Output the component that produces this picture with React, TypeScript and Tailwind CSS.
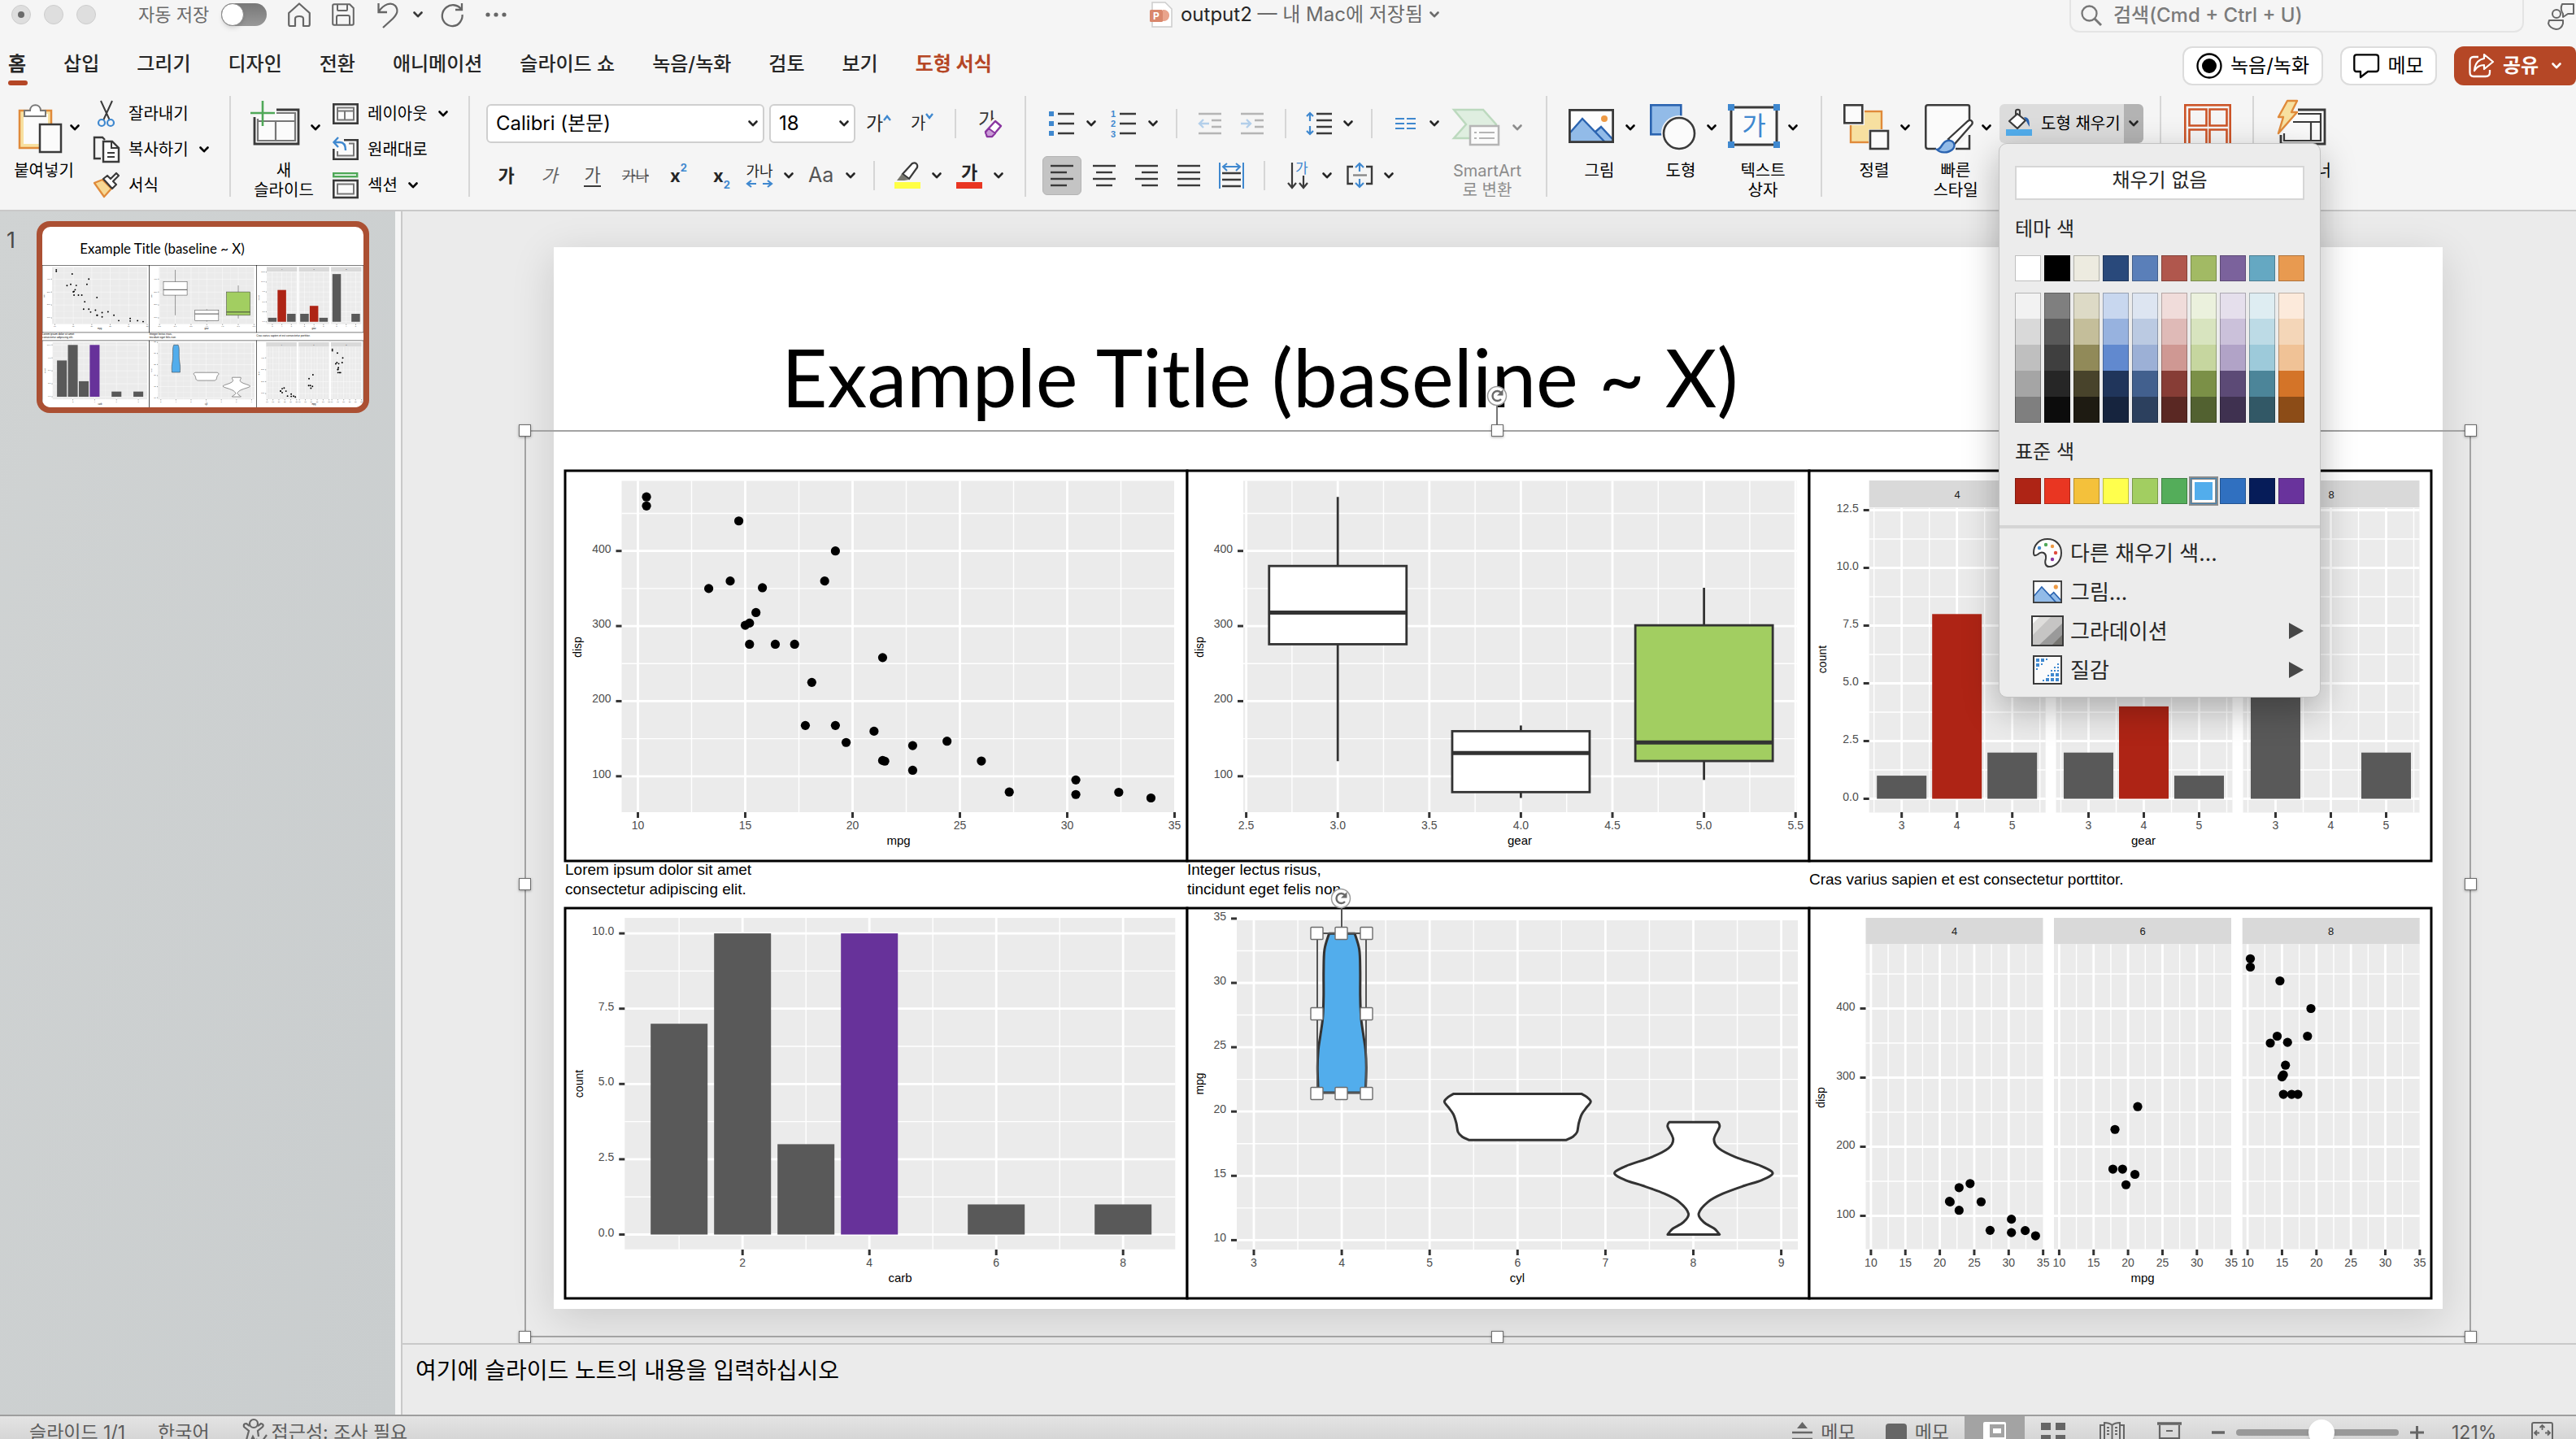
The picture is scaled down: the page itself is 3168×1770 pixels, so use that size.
import React from 'react';

type Kids = { children?: React.ReactNode };

/* ---------- data ---------- */

const CARS: [number, number, number][] = [
  [21, 160, 6], [22.8, 108, 4], [21.4, 258, 6], [18.7, 360, 8], [18.1, 225, 6], [14.3, 360, 8],
  [24.4, 146.7, 4], [22.8, 140.8, 4], [19.2, 167.6, 6], [17.8, 167.6, 6], [16.4, 275.8, 8],
  [17.3, 275.8, 8], [15.2, 275.8, 8], [10.4, 472, 8], [10.4, 460, 8], [14.7, 440, 8],
  [32.4, 78.7, 4], [30.4, 75.7, 4], [33.9, 71.1, 4], [21.5, 120.1, 4], [15.5, 318, 8],
  [15.2, 304, 8], [13.3, 350, 8], [19.2, 400, 8], [27.3, 79, 4], [26, 120.3, 4], [30.4, 95.1, 4],
  [15.8, 351, 8], [19.7, 145, 6], [15, 301, 8], [21.4, 121, 4],
];

const GRAY = '#595959';
const RED = '#ae2415';

/* ---------- chart parts ---------- */

type PanelProps = {
  x: number; y: number; w: number; h: number;
  xMajor: number[]; xMinor: number[]; yMajor: number[]; yMinor: number[];
};

function Panel({ x, y, w, h, xMajor, xMinor, yMajor, yMinor }: PanelProps) {
  return (
    <g>
      <rect x={x} y={y} width={w} height={h} fill="#ebebeb" />
      <g stroke="#fff" strokeWidth={1.4}>
        {xMinor.map((v) => <line key={'a' + v} x1={v} x2={v} y1={y} y2={y + h} />)}
        {yMinor.map((v) => <line key={'b' + v} x1={x} x2={x + w} y1={v} y2={v} />)}
      </g>
      <g stroke="#fff" strokeWidth={2.8}>
        {xMajor.map((v) => <line key={'c' + v} x1={v} x2={v} y1={y} y2={y + h} />)}
        {yMajor.map((v) => <line key={'d' + v} x1={x} x2={x + w} y1={v} y2={v} />)}
      </g>
    </g>
  );
}

type Tick = [number, string];

function XAxis({ ticks, y }: { ticks: Tick[]; y: number }) {
  return (
    <g>
      {ticks.map(([x, t], i) => (
        <g key={i}>
          <line x1={x} x2={x} y1={y} y2={y + 7} stroke="#333" strokeWidth={3} />
          <text x={x} y={y + 21} textAnchor="middle" fill="#4d4d4d" className="text-[14px]">{t}</text>
        </g>
      ))}
    </g>
  );
}

function YAxis({ ticks, x }: { ticks: Tick[]; x: number }) {
  return (
    <g>
      {ticks.map(([y, t], i) => (
        <g key={i}>
          <line x1={x - 7} x2={x} y1={y} y2={y} stroke="#333" strokeWidth={3} />
          <text x={x - 13} y={y + 2} textAnchor="end" fill="#4d4d4d" className="text-[14px]">{t}</text>
        </g>
      ))}
    </g>
  );
}

function Titles({ x, xt, y, yt, ytx = 20 }: { x: number; xt: string; y: number; yt: string; ytx?: number }) {
  return (
    <g fill="#000">
      <text x={x} y={460} textAnchor="middle" className="text-[15px]">{xt}</text>
      <text transform={`translate(${ytx} ${y}) rotate(-90)`} textAnchor="middle" className="text-[14px]">{yt}</text>
    </g>
  );
}

type FrameProps = { x?: number; y?: number; label: string } & Kids;

/* A chart cell. Given x and y it is nested in a larger drawing, otherwise it fills its grid cell. */
function Frame({ x, y, label, children }: FrameProps) {
  const nested = x !== undefined;
  return (
    <svg
      x={x} y={y} width={nested ? 765 : undefined} height={nested ? 480 : undefined}
      viewBox="0 0 765 480" role="img" aria-label={label}
      className={nested ? "overflow-visible font-['Liberation_Sans',sans-serif]" : "block h-auto w-full overflow-visible font-['Liberation_Sans',sans-serif]"}
    >
      <rect x={0} y={0} width={765} height={480} fill="#fff" stroke="#000" strokeWidth={3} />
      {children}
    </svg>
  );
}

type Pos = { x?: number; y?: number };

function ScatterChart(p: Pos) {
  const X = (v: number) => 89.5 + 26.4 * (v - 10);
  const Y = (v: number) => 98.7 + (400 - v) * 0.9237;
  return (
    <Frame {...p} label="mpg, disp">
      <Panel
        x={69.5} y={12.5} w={679.5} h={407.5}
        xMajor={[10, 15, 20, 25, 30].map(X)} xMinor={[12.5, 17.5, 22.5, 27.5, 32.5].map(X)}
        yMajor={[100, 200, 300, 400].map(Y)} yMinor={[150, 250, 350, 450].map(Y)}
      />
      {CARS.map(([m, d], i) => <circle key={i} cx={X(m)} cy={Y(d)} r={5.6} />)}
      <XAxis y={420} ticks={[10, 15, 20, 25, 30, 35].map((v) => [X(v), String(v)])} />
      <YAxis x={69.5} ticks={[100, 200, 300, 400].map((v) => [Y(v), String(v)])} />
      <Titles x={410} xt="mpg" y={217} yt="disp" />
    </Frame>
  );
}

function BoxChart(p: Pos) {
  const X = (v: number) => 72.6 + 225.2 * (v - 2.5);
  const Y = (v: number) => 98.7 + (400 - v) * 0.9237;
  const boxes: [number, number, number, number, number, number, string][] = [
    [3, 120.1, 275.8, 318, 380, 472, '#fff'],
    [4, 71.1, 78.9, 130.9, 160, 167.6, '#fff'],
    [5, 95.1, 120.3, 145, 301, 351, '#a2ce61'],
  ];
  return (
    <Frame {...p} label="gear, disp">
      <Panel
        x={69} y={12.5} w={681} h={407.5}
        xMajor={[2.5, 3, 3.5, 4, 4.5, 5, 5.5].map(X)} xMinor={[2.75, 3.25, 3.75, 4.25, 4.75, 5.25].map(X)}
        yMajor={[100, 200, 300, 400].map(Y)} yMinor={[150, 250, 350, 450].map(Y)}
      />
      {boxes.map(([g, lo, q1, m, q3, hi, fill]) => (
        <g key={g} stroke="#333" strokeWidth={2.8}>
          <line x1={X(g)} x2={X(g)} y1={Y(hi)} y2={Y(lo)} />
          <rect x={X(g - 0.375)} y={Y(q3)} width={169} height={Y(q1) - Y(q3)} fill={fill} />
          <line x1={X(g - 0.375)} x2={X(g + 0.375)} y1={Y(m)} y2={Y(m)} strokeWidth={5} />
        </g>
      ))}
      <XAxis y={420} ticks={[2.5, 3, 3.5, 4, 4.5, 5, 5.5].map((v) => [X(v), v.toFixed(1)])} />
      <YAxis x={69} ticks={[100, 200, 300, 400].map((v) => [Y(v), String(v)])} />
      <Titles x={409} xt="gear" y={217} yt="disp" />
    </Frame>
  );
}

function Strip({ x, w, h, label }: { x: number; w: number; h: number; label: string }) {
  return (
    <g>
      <rect x={x} y={12} width={w} height={h} fill="#d9d9d9" />
      <text x={x + w / 2} y={12 + h / 2 + 5} textAnchor="middle" fill="#1a1a1a" className="text-[13px]">{label}</text>
    </g>
  );
}

function FacetBarChart(p: Pos) {
  const Y = (v: number) => 403.5 - 28.4 * v;
  const facets: [number, string, [number, string][]][] = [
    [73.7, '4', [[1, GRAY], [8, RED], [2, GRAY]]],
    [303.5, '6', [[2, GRAY], [4, RED], [1, GRAY]]],
    [533.5, '8', [[12, GRAY], [0, GRAY], [2, GRAY]]],
  ];
  return (
    <Frame {...p} label="gear, count">
      {facets.map(([x, label, bars]) => (
        <g key={label}>
          <Strip x={x} w={217} h={33} label={label} />
          <Panel
            x={x} y={45.5} w={217} h={375}
            xMajor={[x + 40, x + 108, x + 176]} xMinor={[x + 6, x + 74, x + 142, x + 210]}
            yMajor={[0, 2.5, 5, 7.5, 10, 12.5].map(Y)} yMinor={[1.25, 3.75, 6.25, 8.75, 11.25].map(Y)}
          />
          {bars.map(([v, c], i) => (
            <rect key={i} x={x + 40 + 68 * i - 30.5} y={Y(v)} width={61} height={28.4 * v} fill={c} />
          ))}
          <XAxis y={420} ticks={[3, 4, 5].map((v, i) => [x + 40 + 68 * i, String(v)])} />
        </g>
      ))}
      <YAxis x={73.7} ticks={[0, 2.5, 5, 7.5, 10, 12.5].map((v) => [Y(v), v.toFixed(1)])} />
      <Titles x={411} xt="gear" y={232} yt="count" ytx={21} />
    </Frame>
  );
}

function BarChart(p: Pos) {
  const X = (v: number) => 218.2 + 78 * (v - 2);
  const Y = (v: number) => 401.5 - 37.04 * v;
  const bars: [number, number, string][] = [
    [1, 7, GRAY], [2, 10, GRAY], [3, 3, GRAY], [4, 10, '#67329a'], [6, 1, GRAY], [8, 1, GRAY],
  ];
  return (
    <Frame {...p} label="carb, count">
      <Panel
        x={73.3} y={12} w={677} h={407.7}
        xMajor={[2, 4, 6, 8].map(X)} xMinor={[1, 3, 5, 7].map(X)}
        yMajor={[0, 2.5, 5, 7.5, 10].map(Y)} yMinor={[1.25, 3.75, 6.25, 8.75].map(Y)}
      />
      {bars.map(([x, v, c]) => (
        <rect key={x} x={X(x) - 35} y={Y(v)} width={70} height={37.04 * v} fill={c} />
      ))}
      <XAxis y={420} ticks={[2, 4, 6, 8].map((v) => [X(v), String(v)])} />
      <YAxis x={73.3} ticks={[0, 2.5, 5, 7.5, 10].map((v) => [Y(v), v.toFixed(1)])} />
      <Titles x={412} xt="carb" y={216} yt="count" ytx={22} />
    </Frame>
  );
}

/* Smooth curve through the points, without the leading move command. */
function curve(pts: [number, number][]) {
  let d = '';
  for (let i = 0; i < pts.length - 1; i++) {
    const p0 = pts[Math.max(0, i - 1)];
    const p1 = pts[i];
    const p2 = pts[i + 1];
    const p3 = pts[Math.min(pts.length - 1, i + 2)];
    d += ` C${p1[0] + (p2[0] - p0[0]) / 6} ${p1[1] + (p2[1] - p0[1]) / 6} ${p2[0] - (p3[0] - p1[0]) / 6} ${p2[1] - (p3[1] - p1[1]) / 6} ${p2[0]} ${p2[1]}`;
  }
  return d;
}

function violin(cx: number, profile: [number, number][]) {
  const right = profile.map(([w, y]) => [cx + w, y] as [number, number]);
  const left = profile.map(([w, y]) => [cx - w, y] as [number, number]).reverse();
  return `M${right[0][0]} ${right[0][1]}${curve(right)} L${left[0][0]} ${left[0][1]}${curve(left)} Z`;
}

const V4: [number, number][] = [[15.7, 31.2], [21.4, 51], [22.5, 77.4], [22.5, 108], [23.5, 134.7], [26.5, 156.7], [29, 174.3], [30, 196.3], [29, 227]];
const V6: [number, number][] = [[78.5, 228.4], [85.3, 232.4], [90, 238], [85.3, 244.7], [79, 253.5], [75.3, 264.5], [73.2, 275.5], [68, 281.2], [60, 285.2]];
const V8: [number, number][] = [[29.8, 263.2], [31.9, 268.9], [25.1, 284.3], [30.9, 295.3], [51.8, 306.3], [83.2, 317.3], [97.3, 326.1], [83.2, 334.9], [62.2, 341.5], [36, 351.2], [17.8, 361.3], [6.3, 375.8], [12.6, 386.4], [25.6, 394.3], [31.9, 401.4]];

function RotateGlyph({ cx, cy }: { cx: number; cy: number }) {
  return (
    <g>
      <circle cx={cx} cy={cy} r={11.5} fill="#fff" stroke="#9a9a9a" strokeWidth={1.5} />
      <path d={`M${cx + 5} ${cy - 4} A6 6 0 1 0 ${cx + 5} ${cy + 4}`} fill="none" stroke="#6a6a6a" strokeWidth={2.4} />
      <path d={`M${cx + 7.5} ${cy - 8} v7.5 h-7.5 Z`} fill="#6a6a6a" />
    </g>
  );
}

function ViolinChart({ selected, ...p }: Pos & { selected?: boolean }) {
  const X = (v: number) => 82 + 108.1 * (v - 3);
  const Y = (v: number) => 408.4 - 15.82 * (v - 10);
  return (
    <Frame {...p} label="cyl, mpg">
      <Panel
        x={61} y={15} w={690} h={405}
        xMajor={[3, 4, 5, 6, 7, 8, 9].map(X)} xMinor={[3.5, 4.5, 5.5, 6.5, 7.5, 8.5].map(X)}
        yMajor={[10, 15, 20, 25, 30].map(Y)} yMinor={[12.5, 17.5, 22.5, 27.5, 32.5].map(Y)}
      />
      <g stroke="#333" strokeWidth={3} strokeLinejoin="round">
        <path d={violin(190.3, V4)} fill="#52adec" />
        <path d={violin(406.3, V6)} fill="#fff" />
        <path d={violin(622.8, V8)} fill="#fff" />
      </g>
      <XAxis y={420} ticks={[3, 4, 5, 6, 7, 8, 9].map((v) => [X(v), String(v)])} />
      <YAxis x={61} ticks={[10, 15, 20, 25, 30, 35].map((v) => [Y(v), String(v)])} />
      <Titles x={406} xt="cyl" y={216} yt="mpg" />
      {selected && (
        <g>
          <path d="M190 0 V30" stroke="#555" strokeWidth={2} />
          <rect x={160} y={31} width={60} height={196} fill="none" stroke="#555" strokeWidth={2} />
          {[160, 190, 221].map((x) => [31, 130, 228].map((y) => (
            x === 190 && y === 130 ? null : (
              <rect key={x + '-' + y} x={x - 8} y={y - 7.5} width={15} height={15} rx={1} fill="#fff" stroke="#6d6d6d" strokeWidth={1.4} />
            )
          )))}
          <RotateGlyph cx={189} cy={-12} />
        </g>
      )}
    </Frame>
  );
}

function FacetScatterChart(p: Pos) {
  const Y = (v: number) => 123.5 + (400 - v) * 0.85;
  const facets: [number, number][] = [[69.5, 4], [301, 6], [532.7, 8]];
  return (
    <Frame {...p} label="mpg, disp">
      {facets.map(([x, cyl]) => {
        const X = (v: number) => x + 6.4 + 8.47 * (v - 10);
        return (
          <g key={cyl}>
            <Strip x={x} w={218} h={32.5} label={String(cyl)} />
            <Panel
              x={x} y={44.5} w={218} h={375}
              xMajor={[10, 15, 20, 25, 30].map(X)} xMinor={[12.5, 17.5, 22.5, 27.5, 32.5].map(X)}
              yMajor={[100, 200, 300, 400].map(Y)} yMinor={[150, 250, 350, 450].map(Y)}
            />
            {CARS.filter((c) => c[2] === cyl).map(([m, d], i) => <circle key={i} cx={X(m)} cy={Y(d)} r={5.6} />)}
            <XAxis y={420} ticks={[10, 15, 20, 25, 30, 35].map((v) => [X(v), String(v)])} />
          </g>
        );
      })}
      <YAxis x={69.5} ticks={[100, 200, 300, 400].map((v) => [Y(v), String(v)])} />
      <Titles x={410} xt="mpg" y={233} yt="disp" ytx={19} />
    </Frame>
  );
}

/* ---------- slide ---------- */

const TITLE = 'Example Title (baseline ~ X)';

function Thumbnail() {
  return (
    <svg viewBox="14 0 2295 1290" className="block w-full rounded-[10px] bg-white" aria-label="슬라이드 1">
      <text x={283} y={194} className="font-[Lato,sans-serif] text-[98px]">{TITLE}</text>
      <ScatterChart x={14} y={275} />
      <BoxChart x={779} y={275} />
      <FacetBarChart x={1544} y={275} />
      <g className="font-['Liberation_Sans',sans-serif] text-[19px]">
        <text x={14} y={772}>Lorem ipsum dolor sit amet</text>
        <text x={14} y={796}>consectetur adipiscing elit.</text>
        <text x={779} y={772}>Integer lectus risus,</text>
        <text x={779} y={796}>tincidunt eget felis non</text>
        <text x={1544} y={784}>Cras varius sapien et est consectetur porttitor.</text>
      </g>
      <BarChart x={14} y={813} />
      <ViolinChart x={779} y={813} />
      <FacetScatterChart x={1544} y={813} />
    </svg>
  );
}

function Caption({ children }: Kids) {
  return (
    <p className="flex h-[58px] items-center pb-3 font-['Liberation_Sans',sans-serif] text-[19px] leading-6 text-black">
      <span>{children}</span>
    </p>
  );
}

function Handle({ className }: { className: string }) {
  return <span className={`absolute size-[15px] border border-[#6d6d6d] bg-white shadow-[0_1px_3px_rgba(0,0,0,0.35)] ${className}`} />;
}

function SelectionFrame() {
  return (
    <div className="pointer-events-none absolute -bottom-[35px] -left-[36px] -right-[35px] top-[225px] border-2 border-[#a3a3a3]">
      <svg width="26" height="44" viewBox="0 0 26 44" className="absolute -top-[46px] left-1/2 -ml-[14px] overflow-visible">
        <path d="M13 14 V46" stroke="#777" strokeWidth="2" />
        <RotateGlyph cx={13} cy={2} />
      </svg>
      <Handle className="-left-[9px] -top-[9px]" />
      <Handle className="-top-[9px] left-1/2 -ml-2" />
      <Handle className="-right-[9px] -top-[9px]" />
      <Handle className="-left-[9px] top-1/2 -mt-[7px]" />
      <Handle className="-right-[9px] top-1/2 -mt-[7px]" />
      <Handle className="-bottom-[9px] -left-[9px]" />
      <Handle className="-bottom-[9px] left-1/2 -ml-2" />
      <Handle className="-bottom-[9px] -right-[9px]" />
    </div>
  );
}

function Slide() {
  return (
    <article className="relative ml-[186px] mr-[164px] mt-11 bg-white px-3.5 pb-[13px] shadow-[0_12px_50px_rgba(0,0,0,0.14)]">
      <h1 className="h-[275px] whitespace-nowrap pl-[266px] pt-[99px] font-[Lato,sans-serif] text-[98px] leading-[120px] text-black">{TITLE}</h1>
      <div className="grid grid-cols-3">
        <ScatterChart />
        <BoxChart />
        <FacetBarChart />
        <Caption>Lorem ipsum dolor sit amet<br />consectetur adipiscing elit.</Caption>
        <Caption>Integer lectus risus,<br />tincidunt eget felis non</Caption>
        <Caption>Cras varius sapien et est consectetur porttitor.</Caption>
        <BarChart />
        <ViolinChart selected />
        <FacetScatterChart />
      </div>
      <SelectionFrame />
    </article>
  );
}

/* ---------- icons ---------- */

function Svg({ w, h, className = '', children }: { w: number; h: number; className?: string } & Kids) {
  return (
    <svg width={w} height={h} viewBox={`0 0 ${w} ${h}`} fill="none" aria-hidden="true" className={`shrink-0 overflow-visible ${className}`}>
      {children}
    </svg>
  );
}

function Chev({ className = '' }: { className?: string }) {
  return (
    <Svg w={12} h={8} className={className}>
      <path d="M1.5 1.5 L6 6.2 L10.5 1.5" stroke="currentColor" strokeWidth="2.6" strokeLinecap="round" strokeLinejoin="round" />
    </Svg>
  );
}

const INK = '#3a3a3a';
const BLUE = '#3f88cf';

const PasteIcon = () => (
  <Svg w={54} h={60}>
    <rect x="2" y="8" width="39" height="46" fill="#f7e0a0" stroke="#e08a3a" strokeWidth="2.5" />
    <rect x="7" y="12" width="30" height="37" fill="#fbfbfb" />
    <path d="M8 15 V8 H15 C15 -1 28 -1 28 8 H34 V15 Z" fill="#fff" stroke="#777" strokeWidth="2" />
    <rect x="27" y="25" width="26" height="34" fill="#fbfbfb" stroke={INK} strokeWidth="2.5" />
  </Svg>
);
const CutIcon = () => (
  <Svg w={32} h={32}>
    <path d="M9 0 L20 24 M23 0 L12 24" stroke={INK} strokeWidth="2" />
    <circle cx="10" cy="27" r="4" stroke={BLUE} strokeWidth="2.2" />
    <circle cx="21" cy="27" r="4" stroke={BLUE} strokeWidth="2.2" />
  </Svg>
);
const CopyIcon = () => (
  <Svg w={32} h={32}>
    <path d="M9 27 H1 V1 H11 L14 4" stroke={INK} strokeWidth="2.4" />
    <path d="M12 6 H23 L31 14 V31 H12 Z" fill="#fbfbfb" stroke={INK} strokeWidth="2.4" />
    <path d="M22 6 V14 H31 M17 20 H26 M17 25 H26" stroke={INK} strokeWidth="2" />
  </Svg>
);
const BrushIcon = () => (
  <Svg w={32} h={32}>
    <path d="M1 13 L13 30 L22 20 L11 9 Z" fill="#f7d894" stroke="#e08a3a" strokeWidth="2.2" strokeLinejoin="round" />
    <path d="M12 8 L17 4 L21 8 L28 1 L31 4 L24 11 L28 15 L23 20 Z" fill="#fff" stroke={INK} strokeWidth="2.2" strokeLinejoin="round" />
  </Svg>
);
const NewSlideIcon = () => (
  <Svg w={60} h={54}>
    <path d="M32 7 H59 V49 H5 V16" fill="#fbfbfb" stroke={INK} strokeWidth="2.8" />
    <path d="M9 18 V45 H55 V11 H32 M9 21 H55 M31 22 V45" stroke="#777" strokeWidth="2.2" />
    <path d="M15 -4 V27 M0 11 H30" stroke="#4fa858" strokeWidth="2.6" />
  </Svg>
);
const LayoutIcon = () => (
  <Svg w={32} h={26}>
    <rect x="1.3" y="1.3" width="29.4" height="23.4" fill="#fbfbfb" stroke={INK} strokeWidth="2.6" />
    <rect x="6" y="5.5" width="20" height="15" stroke="#777" strokeWidth="2" />
    <path d="M6 9.5 H26 M15 10 V20" stroke="#777" strokeWidth="2" />
  </Svg>
);
const ResetIcon = () => (
  <Svg w={32} h={26}>
    <path d="M14 1.3 H30.7 V24.7 H1.3 V12" fill="#fbfbfb" stroke={INK} strokeWidth="2.6" />
    <path d="M20 5.5 H26 V20.5 H6 V15" stroke="#777" strokeWidth="2" />
    <path d="M7 -2 L1.5 4 L7 10 M2 4 H9 C14 4 16 8 16 14" stroke={BLUE} strokeWidth="2.4" />
  </Svg>
);
const SectionIcon = () => (
  <Svg w={32} h={32}>
    <rect x="1.2" y="1.2" width="29" height="4" fill="#fff" stroke="#4fa858" strokeWidth="2.4" />
    <rect x="1.3" y="10" width="29.4" height="21" fill="#fbfbfb" stroke={INK} strokeWidth="2.6" />
    <rect x="6" y="14.5" width="20" height="12" stroke="#777" strokeWidth="2" />
  </Svg>
);
const ListIcon = () => (
  <Svg w={32} h={32}>
    <path d="M11 4 H31 M11 16 H31 M11 28 H31" stroke={INK} strokeWidth="2.4" />
    <path d="M0 1 h6 v6 h-6 Z M0 13 h6 v6 h-6 Z M0 25 h6 v6 h-6 Z" fill={BLUE} />
  </Svg>
);
const NumberIcon = () => (
  <Svg w={32} h={32}>
    <path d="M11 4 H31 M11 16 H31 M11 28 H31" stroke={INK} strokeWidth="2.4" />
    <g fill={BLUE} className="font-['Liberation_Sans',sans-serif] text-[11px] font-bold">
      <text x="0" y="8">1</text><text x="0" y="20">2</text><text x="0" y="33">3</text>
    </g>
  </Svg>
);
const OutdentIcon = () => (
  <Svg w={29} h={28}>
    <path d="M0 2 H28 M16 10 H28 M16 18 H28 M0 26 H28" stroke="#b5b5b5" strokeWidth="2.4" />
    <path d="M13 14 H1 M6 9 L1 14 L6 19" stroke="#b3cfea" strokeWidth="2.4" />
  </Svg>
);
const IndentIcon = () => (
  <Svg w={30} h={28}>
    <path d="M0 2 H28 M17 10 H28 M17 18 H28 M0 26 H28" stroke="#b5b5b5" strokeWidth="2.4" />
    <path d="M0 14 H12 M7 9 L12 14 L7 19" stroke="#b3cfea" strokeWidth="2.4" />
  </Svg>
);
const SpacingIcon = () => (
  <Svg w={34} h={30}>
    <path d="M13 3 H32 M13 11 H32 M13 19 H32 M13 27 H32" stroke={INK} strokeWidth="2.4" />
    <path d="M5 2 V12 M5 18 V28 M1 6 L5 2 L9 6 M1 24 L5 28 L9 24" stroke={BLUE} strokeWidth="2.2" />
  </Svg>
);
const ColumnsIcon = () => (
  <Svg w={26} h={16}>
    <path d="M0 2 H11 M14 2 H25 M0 8 H11 M14 8 H25 M0 14 H11 M14 14 H25" stroke={BLUE} strokeWidth="2.2" />
  </Svg>
);
const SmartArtIcon = () => (
  <Svg w={58} h={52}>
    <path d="M2 7 H38 L54 25 L40 42 H2 L17 25 Z" fill="#dfeee0" stroke="#bcd9be" strokeWidth="2.5" />
    <rect x="22" y="27" width="35" height="23" fill="#fbfbfb" stroke="#b5b5b5" strokeWidth="2.5" />
    <path d="M27 35 h3 M33 35 H52 M27 42 h3 M33 42 H52" stroke="#b5b5b5" strokeWidth="2.2" />
  </Svg>
);
const Lines = ({ a }: { a: [number, number][] }) => (
  <Svg w={28} h={28}>
    {a.map(([x1, x2], i) => <path key={i} d={`M${x1} ${2 + 8 * i} H${x2}`} stroke={INK} strokeWidth="2.4" />)}
  </Svg>
);
const DistributeIcon = () => (
  <Svg w={31} h={32}>
    <path d="M1 0 V32 M30 0 V32" stroke={BLUE} strokeWidth="2" />
    <path d="M5 5 H26 M10 1 L5 5 L10 10 M21 1 L26 5 L21 10" stroke={BLUE} strokeWidth="2" />
    <path d="M4 13 H27 M4 21 H27 M4 29 H27" stroke={INK} strokeWidth="2.4" />
  </Svg>
);
const DirectionIcon = () => (
  <Svg w={30} h={32}>
    <path d="M5 0 V30 M0 25 L5 31 L10 25 M19 16 V30 M14 25 L19 31 L24 25" stroke={INK} strokeWidth="2.2" />
    <text x="9" y="13" fill={BLUE} className="text-[17px]">가</text>
  </Svg>
);
const VAlignIcon = () => (
  <Svg w={34} h={32}>
    <path d="M8 5 H1.5 V26 H8 M24 5 H31 V26 H24" stroke={INK} strokeWidth="2.4" />
    <path d="M8 15.5 H25" stroke="#888" strokeWidth="2.4" />
    <path d="M16 11 V1 M11 6 L16 1 L21 6 M16 20 V30 M11 25 L16 30 L21 25" stroke={BLUE} strokeWidth="2.2" />
  </Svg>
);
const ClearIcon = () => (
  <Svg w={32} h={36}>
    <text x="3" y="22" fill={INK} className="text-[24px]">가</text>
    <path d="M24 14 L32 20 L20 35 L11 28 Z" fill="#fff" stroke="#f5f5f5" strokeWidth="6" />
    <path d="M24 15 L31 21 L20 34 L14 34 L12 28 Z" fill="#fff" stroke="#8a36a0" strokeWidth="2.4" strokeLinejoin="round" />
    <path d="M16 24 L24 30 L20 34 H14 L12 29 Z" fill="#c99bd6" stroke="#8a36a0" strokeWidth="2" strokeLinejoin="round" />
  </Svg>
);
const HighlightIcon = () => (
  <Svg w={32} h={32}>
    <path d="M10 14 L22 1 C26 -1 29 2 28 6 L18 20 Z" fill="#fff" stroke={INK} strokeWidth="2.2" />
    <path d="M9 14 L18 21 L12 22 H3 Z" fill="#77776f" />
    <rect x="0" y="24" width="32" height="8" fill="#ffff45" />
  </Svg>
);
const PictureIcon = ({ w, h }: { w: number; h: number }) => (
  <svg width={w} height={h} viewBox="0 0 56 42" preserveAspectRatio="none" fill="none" aria-hidden="true" className="shrink-0">
    <rect x="1.5" y="1.5" width="53" height="39" fill="#fdfdfd" />
    <path d="M2 29 L17 12 L45 40 H2 Z" fill="#92bbe8" />
    <path d="M32 30 L40 22 L54 36 V40 H42 Z" fill="#92bbe8" />
    <path d="M2 29 L17 12 L45 41 M32 29 L40 22 L54 37" stroke="#2a63b0" strokeWidth="2.4" />
    <circle cx="44" cy="12" r="4" fill="#ee9a44" />
    <rect x="1.4" y="1.4" width="53.2" height="39.2" stroke={INK} strokeWidth="2.8" />
  </svg>
);
const ShapesIcon = () => (
  <Svg w={56} h={56}>
    <rect x="1.3" y="1.3" width="37" height="36" fill="#92bbe8" stroke="#2a63b0" strokeWidth="2.6" />
    <circle cx="36" cy="36" r="22" fill="#f5f5f5" />
    <circle cx="36" cy="36" r="19" fill="#fbfbfb" stroke={INK} strokeWidth="2.6" />
  </Svg>
);
const TextBoxIcon = () => (
  <Svg w={64} h={54}>
    <rect x="4" y="4" width="56" height="46" fill="#fbfbfb" stroke={INK} strokeWidth="3" />
    <path d="M0 0 h8 v8 h-8 Z M56 0 h8 v8 h-8 Z M0 46 h8 v8 h-8 Z M56 46 h8 v8 h-8 Z" fill={BLUE} />
    <text x="32" y="38" textAnchor="middle" fill={BLUE} className="text-[32px]">가</text>
  </Svg>
);
const ArrangeIcon = () => (
  <Svg w={56} h={56}>
    <rect x="9" y="9" width="38" height="38" fill="#f7e0a0" stroke="#e08a3a" strokeWidth="2.4" />
    <rect x="-2" y="-2" width="28" height="28" fill="#f5f5f5" />
    <rect x="31" y="31" width="28" height="28" fill="#f5f5f5" />
    <rect x="1.3" y="1.3" width="22" height="22" fill="#fbfbfb" stroke={INK} strokeWidth="2.6" />
    <rect x="33" y="33" width="22" height="22" fill="#fbfbfb" stroke={INK} strokeWidth="2.6" />
  </Svg>
);
const StyleIcon = () => (
  <Svg w={60} h={60}>
    <path d="M55 22 V3 C55 2 54 1.3 53 1.3 H4 C2 1.3 1.3 2 1.3 4 V52 C1.3 54 2 55 4 55 H14 M38 55 H55 V38" fill="#fbfbfb" stroke={INK} strokeWidth="2.5" />
    <path d="M29 43 L53 21 C57 18 60 22 58 25 L36 50 Z" fill="#fff" stroke={INK} strokeWidth="2.3" />
    <path d="M15 56 C21 56 21 46 28 45 C36 44 39 51 34 56 C28 61 19 60 15 56 Z" fill="#92bbe8" stroke="#2a63b0" strokeWidth="2.4" />
  </Svg>
);
const BucketIcon = () => (
  <Svg w={34} h={34}>
    <path d="M13 10 V2 C13 -1 18 -1 18 2 V8" stroke={INK} strokeWidth="2" />
    <path d="M5 14 L15 5 L25 13 L15 23 Z" fill="#fff" stroke={INK} strokeWidth="2.2" strokeLinejoin="round" />
    <path d="M23 9 C29 9 30 13 30 21 C27 17 26 13 23 9 Z" fill="#2a63b0" />
    <rect x="1" y="24" width="32" height="8" fill="#52adec" />
  </Svg>
);
const AddInIcon = () => (
  <Svg w={58} h={56}>
    <rect x="1.3" y="1.3" width="55.4" height="60" stroke="#cc5427" strokeWidth="2.6" />
    <path d="M6.5 6.5 h21 v20 h-21 Z M31.5 6.5 h21 v20 h-21 Z M6.5 31.5 h21 v21 h-21 Z M31.5 31.5 h21 v21 h-21 Z" stroke="#cc5427" strokeWidth="2.6" />
  </Svg>
);
const DesignerIcon = () => (
  <Svg w={60} h={54}>
    <path d="M26 7 H59 V49 H5 V38" fill="#fbfbfb" stroke={INK} strokeWidth="2.8" />
    <path d="M26 12 H54 V45 H9 V36 M20 22 H54 M42 22 V45" stroke={INK} strokeWidth="2.2" />
    <path d="M13 -4 H25 L18 10 H25 L2 36 L8 16 H2 Z" fill="#f7e0a0" stroke="#e08a3a" strokeWidth="2.4" strokeLinejoin="round" />
  </Svg>
);

/* ---------- title bar ---------- */

function TitleBar() {
  return (
    <header className="grid h-10 grid-cols-[1fr_auto_1fr] text-[22px] text-[#6b6b6b]">
      <div className="flex h-9 items-center pl-3.5">
        <div className="flex gap-4">
          <span className="flex size-6 items-center justify-center rounded-full border border-[#cdcdcd] bg-[#dedede]"><span className="size-2 rounded-full bg-[#6b6b6b]" /></span>
          <span className="size-6 rounded-full border border-[#cdcdcd] bg-[#dedede]" />
          <span className="size-6 rounded-full border border-[#cdcdcd] bg-[#dedede]" />
        </div>
        <label htmlFor="autosave" className="ml-[52px] w-[102px]">자동 저장</label>
        <input
          id="autosave" type="checkbox"
          className="relative h-7 w-14 appearance-none rounded-full bg-gradient-to-b from-[#777] to-[#999] before:absolute before:left-0 before:top-0 before:size-7 before:rounded-full before:border before:border-[#888] before:bg-white before:shadow-md"
        />
        <button aria-label="홈" className="ml-[26px]">
          <Svg w={28} h={30}><path d="M1.2 13 L14 1.5 L26.8 13 V27 Q26.8 29 25 29 H19 V20 Q19 17 14 17 Q9 17 9 20 V29 H3 Q1.2 29 1.2 27 Z" stroke="#666" strokeWidth="2.2" strokeLinejoin="round" /></Svg>
        </button>
        <button aria-label="저장" className="ml-[26px]">
          <Svg w={28} h={28}>
            <path d="M3 1.2 H22 L26.8 6 V25 Q26.8 26.8 25 26.8 H3 Q1.2 26.8 1.2 25 V3 Q1.2 1.2 3 1.2 Z M7 1.5 V8 Q7 9 8 9 H18 Q19 9 19 8 V1.5 M6 26.5 V17 Q6 15 8 15 H20 Q22 15 22 17 V26.5" stroke="#666" strokeWidth="2" />
          </Svg>
        </button>
        <button aria-label="실행 취소" className="ml-7 flex items-center gap-[18px]">
          <Svg w={26} h={32}><path d="M1.5 2 V13 H12 M2 12 C8 3 17 0 22 5 C27 11 24 16 19 21 L7 32" stroke="#666" strokeWidth="2.3" /></Svg>
          <Chev className="text-[#3a3a3a]" />
        </button>
        <button aria-label="다시 실행" className="ml-[22px]">
          <Svg w={28} h={30}><path d="M26 1 V9 H18 M25 8 C20 2 12 2 7 6 C1 11 0 19 5 25 C11 31 20 30 24 24 C26 21 27 18 26.5 15" stroke="#666" strokeWidth="2.3" /></Svg>
        </button>
        <button aria-label="더 보기" className="ml-[26px]">
          <Svg w={28} h={6}><circle cx="4" cy="3" r="2.6" fill="#666" /><circle cx="14" cy="3" r="2.6" fill="#666" /><circle cx="24" cy="3" r="2.6" fill="#666" /></Svg>
        </button>
      </div>
      <div className="flex h-9 items-center pl-4 text-[24px]">
        <Svg w={28} h={32}>
          <path d="M3 1 H19 L27 9 V31 H3 Z" fill="#fff" stroke="#ccc" strokeWidth="1.5" />
          <path d="M16 10 A7 7 0 0 1 24 18 A7 7 0 0 1 16 24 Z" fill="#e9a48c" />
          <rect x="0" y="10" width="16" height="15" rx="1.5" fill="#d9876c" />
          <text x="4" y="22" fill="#fff" className="font-[Inter,sans-serif] text-[12px] font-bold">P</text>
        </Svg>
        <h1 className="ml-2.5 whitespace-pre"><span className="text-[#262626]">output2</span> — 내 Mac에 저장됨</h1>
        <Chev className="ml-2" />
      </div>
      <div className="flex items-center justify-end pr-0.5">
        <label className="flex h-10 w-[559px] items-center rounded-b-xl border-x-2 border-b-2 border-[#e4e4e4] pl-3">
          <Svg w={26} h={26}><circle cx="10.5" cy="10.5" r="9" stroke="#777" strokeWidth="2.3" /><path d="M17 17 L25 25" stroke="#777" strokeWidth="3" /></Svg>
          <input type="search" aria-label="검색" placeholder="검색(Cmd + Ctrl + U)" className="ml-3.5 min-w-0 flex-1 bg-transparent text-[24px] font-medium outline-none placeholder:text-[#7b7b7b]" />
        </label>
        <button aria-label="공동 작업" className="ml-7">
          <Svg w={34} h={34}>
            <circle cx="12" cy="14" r="5" stroke="#666" strokeWidth="2" />
            <path d="M3 22 H20 V26 Q18 33 11.5 33 Q4 32 2 26 Z" stroke="#666" strokeWidth="2" strokeLinejoin="round" />
            <path d="M19 2 H33 V14 H26 L20 18 V14 Q16 8 19 2 Z" stroke="#666" strokeWidth="2" strokeLinejoin="round" />
          </Svg>
        </button>
      </div>
    </header>
  );
}

/* ---------- tabs ---------- */

const TABS = ['삽입', '그리기', '디자인', '전환', '애니메이션', '슬라이드 쇼', '녹음/녹화', '검토', '보기'];

function TabRow() {
  return (
    <nav className="flex h-[78px] items-center justify-between pl-2.5 text-[24px] text-[#262626]">
      <div className="flex h-16 items-center gap-[46px] font-medium">
        <button className="relative font-bold">홈<span className="absolute -bottom-2 left-0 h-1.5 w-6 rounded-full bg-[#b54726]" /></button>
        {TABS.map((t) => <button key={t}>{t}</button>)}
        <button className="font-bold text-[#b54726]">도형 서식</button>
      </div>
      <div className="flex h-12 items-center gap-[21px] pt-1 text-black">
        <button className="flex h-12 w-[173px] items-center justify-center gap-2.5 rounded-xl border-2 border-[#dcdcdc] bg-white">
          <Svg w={32} h={32}><circle cx="16" cy="16" r="14.5" stroke="#000" strokeWidth="2.3" /><circle cx="16" cy="16" r="9" fill="#000" /></Svg>
          녹음/녹화
        </button>
        <button className="flex h-12 w-[119px] items-center justify-center gap-2.5 rounded-xl border-2 border-[#dcdcdc] bg-white">
          <Svg w={32} h={30}><path d="M4 1.3 H28 Q31 1.3 31 4 V19 Q31 22 28 22 H18 L9 29 V22 H4 Q1.3 22 1.3 19 V4 Q1.3 1.3 4 1.3 Z" stroke="#000" strokeWidth="2.3" strokeLinejoin="round" /></Svg>
          메모
        </button>
        <button className="flex h-12 w-[150px] items-center rounded-l-xl rounded-r-lg bg-[#b54726] pl-[18px] font-bold text-white">
          <Svg w={32} h={28}>
            <path d="M12 3 H6 Q1.5 3 1.5 8 V22 Q1.5 27 6 27 H21 Q26 27 26 22 V19" stroke="#fff" strokeWidth="2.3" />
            <path d="M19 0 L30 9 L19 18 V13 Q11 13 7 20 Q8 7 19 5 Z" stroke="#fff" strokeWidth="2.2" strokeLinejoin="round" />
          </Svg>
          <span className="ml-2.5">공유</span>
          <Chev className="ml-4" />
        </button>
      </div>
    </nav>
  );
}

/* ---------- ribbon ---------- */

const Sep = () => <span className="h-[124px] w-0.5 shrink-0 bg-[#d6d6d6]" />;
const MiniSep = ({ className }: { className: string }) => <span className={`h-9 w-0.5 shrink-0 bg-[#d6d6d6] ${className}`} />;

type BigProps = { icon: React.ReactNode; label?: React.ReactNode; className?: string; labelClass?: string; rowClass?: string; chevron?: boolean };

function Big({ icon, label, className = 'w-[82px]', labelClass = 'w-[76px]', rowClass = '', chevron = true }: BigProps) {
  return (
    <button className={`flex shrink-0 flex-col items-start ${className}`}>
      <span className={`flex h-20 w-full items-start justify-between pt-2.5 ${rowClass}`}>
        {icon}
        {chevron && <Chev className="mt-[25px]" />}
      </span>
      <span className={`flex justify-center whitespace-nowrap text-center text-[20px] leading-6 ${labelClass}`}><span>{label}</span></span>
    </button>
  );
}

function SmallRow({ icon, label, chevron }: { icon: React.ReactNode; label: string; chevron?: boolean }) {
  return (
    <button className="flex h-11 items-center gap-[11px] whitespace-nowrap text-[20px]">
      {icon}<span>{label}</span>{chevron && <Chev className="ml-0.5" />}
    </button>
  );
}

const Cell = ({ children, label, className = 'w-[53px]' }: { label: string; className?: string } & Kids) => (
  <button aria-label={label} className={`flex h-12 shrink-0 items-center justify-center ${className}`}>{children}</button>
);

function Combo({ id, value, className, label }: { id: string; value: string; className: string; label: string }) {
  return (
    <div className={`relative h-12 ${className}`}>
      <select id={id} aria-label={label} className="h-full w-full appearance-none rounded-md border-2 border-[#cfcfcf] bg-white pl-2.5 text-[24px] text-black">
        <option>{value}</option>
      </select>
      <Chev className="pointer-events-none absolute right-2 top-5" />
    </div>
  );
}

function Ribbon() {
  return (
    <section className="relative z-20 flex h-[142px] border-b-2 border-[#c9c9c9] text-[#262626]">
      <div className="flex w-[282px] shrink-0 pl-[18px] text-black">
        <Big className="w-20" labelClass="w-[72px]" rowClass="pl-1" icon={<PasteIcon />} label="붙여넣기" />
        <div className="ml-[17px]">
          <SmallRow icon={<CutIcon />} label="잘라내기" />
          <SmallRow icon={<CopyIcon />} label="복사하기" chevron />
          <SmallRow icon={<BrushIcon />} label="서식" />
        </div>
      </div>
      <Sep />
      <div className="flex w-[292px] shrink-0 pl-6 text-black">
        <Big className="w-[86px]" labelClass="w-[82px]" icon={<NewSlideIcon />} label={<>새<br />슬라이드</>} />
        <div className="ml-[15px]">
          <SmallRow icon={<LayoutIcon />} label="레이아웃" chevron />
          <SmallRow icon={<ResetIcon />} label="원래대로" />
          <SmallRow icon={<SectionIcon />} label="섹션" chevron />
        </div>
      </div>
      <Sep />
      <div className="w-[682px] shrink-0 pl-[18px] pt-2.5">
        <div className="flex h-12 items-center pl-0.5">
          <Combo id="font" label="글꼴" value="Calibri (본문)" className="w-[342px]" />
          <Combo id="size" label="글꼴 크기" value="18" className="ml-1.5 w-[106px]" />
          <button aria-label="글꼴 크게" className="ml-[13px] flex w-8 items-start text-[23px]">가<Svg w={10} h={8} className="mt-1.5"><path d="M1 7 L5 2 L9 7" stroke={BLUE} strokeWidth="2.4" /></Svg></button>
          <button aria-label="글꼴 작게" className="ml-[23px] flex w-[30px] items-start text-[20px]">가<Svg w={10} h={8} className="mt-0.5"><path d="M1 1 L5 6 L9 1" stroke={BLUE} strokeWidth="2.4" /></Svg></button>
          <MiniSep className="ml-6" />
          <button aria-label="서식 지우기" className="ml-6"><ClearIcon /></button>
        </div>
        <div className="mt-4 flex h-12 items-center text-[22px]">
          <Cell label="굵게"><span className="font-bold">가</span></Cell>
          <Cell label="기울임꼴"><span className="italic text-[#666]">가</span></Cell>
          <Cell label="밑줄"><span className="border-b-2 border-[#3a3a3a] leading-[26px] text-[#555]">가</span></Cell>
          <Cell label="취소선"><span className="text-[18px] text-[#555] line-through">가나</span></Cell>
          <Cell label="위 첨자"><span className="flex items-start font-bold">x<span className="text-[13px] leading-3 text-[#3f88cf]">2</span></span></Cell>
          <Cell label="아래 첨자"><span className="flex items-end font-bold">x<span className="text-[13px] leading-3 text-[#3f88cf]">2</span></span></Cell>
          <button aria-label="문자 간격" className="ml-1 flex items-center gap-3.5 text-[18px]">
            <span className="flex w-8 flex-col items-center whitespace-nowrap leading-5">가나
              <Svg w={32} h={10}><path d="M1 5 H12 M6 1 L1 5 L6 9 M20 5 H31 M26 1 L31 5 L26 9" stroke={BLUE} strokeWidth="2.2" /></Svg>
            </span>
            <Chev />
          </button>
          <button aria-label="대/소문자 바꾸기" className="ml-[18px] flex items-center text-[25px] text-[#555]"><span className="w-[46px] text-left">Aa</span><Chev className="text-[#262626]" /></button>
          <MiniSep className="ml-[22px]" />
          <button aria-label="텍스트 강조 색" className="ml-6 flex items-center gap-3.5"><HighlightIcon /><Chev /></button>
          <button aria-label="글꼴 색" className="ml-[18px] flex items-center gap-3.5">
            <span className="w-8 border-b-8 border-[#e93622] text-center text-[22px] font-bold leading-6">가</span><Chev />
          </button>
        </div>
      </div>
      <Sep />
      <div className="flex w-[639px] shrink-0 pl-5">
        <div className="w-[504px] pt-2.5">
          <div className="flex h-12 items-center pl-2">
            <button aria-label="글머리 기호" className="flex items-center gap-3.5"><ListIcon /><Chev /></button>
            <button aria-label="번호 매기기" className="ml-[18px] flex items-center gap-3.5"><NumberIcon /><Chev /></button>
            <MiniSep className="ml-[22px]" />
            <button aria-label="내어쓰기" className="ml-[26px]"><OutdentIcon /></button>
            <button aria-label="들여쓰기" className="ml-[23px]"><IndentIcon /></button>
            <MiniSep className="ml-6" />
            <button aria-label="줄 간격" className="ml-6 flex items-center gap-3"><SpacingIcon /><Chev /></button>
            <MiniSep className="ml-[22px]" />
            <button aria-label="열" className="ml-7 flex items-center gap-4"><ColumnsIcon /><Chev /></button>
          </div>
          <div className="mt-4 flex h-12 items-center">
            <Cell label="왼쪽 맞춤" className="mr-0.5 w-12 rounded-md border border-[#b4b4b4] bg-[#c4c4c4]"><Lines a={[[0, 28], [0, 20], [0, 28], [0, 20]]} /></Cell>
            <Cell label="가운데 맞춤" className="w-[52px]"><Lines a={[[0, 28], [4, 24], [0, 28], [4, 24]]} /></Cell>
            <Cell label="오른쪽 맞춤" className="w-[52px]"><Lines a={[[0, 28], [8, 28], [0, 28], [8, 28]]} /></Cell>
            <Cell label="양쪽 맞춤" className="w-[52px]"><Lines a={[[0, 28], [0, 28], [0, 28], [0, 28]]} /></Cell>
            <Cell label="균등 분할" className="w-[52px]"><DistributeIcon /></Cell>
            <MiniSep className="ml-3.5" />
            <button aria-label="텍스트 방향" className="ml-7 flex items-center gap-3"><DirectionIcon /><Chev /></button>
            <button aria-label="텍스트 맞춤" className="ml-[18px] flex items-center gap-3"><VAlignIcon /><Chev /></button>
          </div>
        </div>
        <Big className="w-[86px] text-[#8c8c8c]" labelClass="w-[86px]" icon={<SmartArtIcon />} label={<>SmartArt<br />로 변환</>} />
      </div>
      <Sep />
      <div className="flex w-[336px] shrink-0 gap-[18px] pl-[26px] text-black">
        <Big icon={<span className="pt-1.5"><PictureIcon w={56} h={42} /></span>} label="그림" />
        <Big icon={<ShapesIcon />} label="도형" />
        <Big className="-ml-1 w-[86px]" labelClass="w-[86px]" icon={<TextBoxIcon />} label={<>텍스트<br />상자</>} />
      </div>
      <Sep />
      <div className="flex w-[415px] shrink-0 pl-[26px] text-black">
        <Big icon={<ArrangeIcon />} label="정렬" />
        <Big className="ml-[18px] w-[82px]" icon={<StyleIcon />} label={<>빠른<br />스타일</>} />
        <div className="relative ml-2.5 mt-2.5 flex h-12">
          <button className="flex h-12 w-[153px] items-center gap-2.5 whitespace-nowrap rounded-l-md bg-[#dcdcdc] pl-[7px] text-[20px]"><BucketIcon />도형 채우기</button>
          <button aria-label="채우기 옵션" aria-expanded="true" className="flex h-12 w-6 items-center justify-center rounded-r-md bg-[#b3b3b3] text-[#262626]"><Chev /></button>
          <FillMenu />
        </div>
      </div>
      <Sep />
      <div className="w-[112px] shrink-0 pl-7"><Big className="w-[58px]" icon={<AddInIcon />} chevron={false} /></div>
      <Sep />
      <div className="shrink-0 pl-7 text-black"><Big className="w-[60px]" labelClass="w-[60px]" icon={<DesignerIcon />} label="디자이너" chevron={false} /></div>
    </section>
  );
}

/* ---------- fill menu ---------- */

const THEME = ['bg-white', 'bg-black', 'bg-[#edebe0]', 'bg-[#29497b]', 'bg-[#5a7fb9]', 'bg-[#b0574d]', 'bg-[#a2ba64]', 'bg-[#7b629c]', 'bg-[#65a8c2]', 'bg-[#e89a50]'];
const SHADES = [
  ['bg-[#f2f2f2]', 'bg-[#d9d9d9]', 'bg-[#bfbfbf]', 'bg-[#a5a5a5]', 'bg-[#7f7f7f]'],
  ['bg-[#7f7f7f]', 'bg-[#595959]', 'bg-[#3f3f3f]', 'bg-[#262626]', 'bg-[#0c0c0c]'],
  ['bg-[#dddac6]', 'bg-[#c4be9a]', 'bg-[#918a59]', 'bg-[#48432b]', 'bg-[#1e1b12]'],
  ['bg-[#c8d7ef]', 'bg-[#97b2df]', 'bg-[#6189cf]', 'bg-[#20355b]', 'bg-[#16243e]'],
  ['bg-[#dde5f1]', 'bg-[#bbcae2]', 'bg-[#9cb0d6]', 'bg-[#42608e]', 'bg-[#2c405e]'],
  ['bg-[#f0dcda]', 'bg-[#dfbab7]', 'bg-[#cf9893]', 'bg-[#873d36]', 'bg-[#5a2823]'],
  ['bg-[#ebf1dd]', 'bg-[#d8e4bf]', 'bg-[#c6d69f]', 'bg-[#7b9047]', 'bg-[#526130]'],
  ['bg-[#e5dfec]', 'bg-[#cbc1da]', 'bg-[#b1a3c7]', 'bg-[#5c4a76]', 'bg-[#3f3150]'],
  ['bg-[#deedf2]', 'bg-[#bddbe6]', 'bg-[#9dcada]', 'bg-[#4c8599]', 'bg-[#325866]'],
  ['bg-[#fceadb]', 'bg-[#f4d6b8]', 'bg-[#f0c296]', 'bg-[#d47428]', 'bg-[#8c4c17]'],
];
const STANDARD = ['bg-[#ae2415]', 'bg-[#e93622]', 'bg-[#f4c13b]', 'bg-[#ffff4d]', 'bg-[#a2ce61]', 'bg-[#54ad5a]', 'bg-[#52adec]', 'bg-[#3070c0]', 'bg-[#061c59]', 'bg-[#69339c]'];

function MenuItem({ icon, label, sub }: { icon: React.ReactNode; label: string; sub?: boolean }) {
  return (
    <button className="flex h-12 w-full items-center pl-[39px] pr-5 text-[26px] text-[#262626]">
      <span className="flex w-10 justify-center">{icon}</span>
      <span className="ml-2 whitespace-nowrap">{label}</span>
      {sub && <Svg w={18} h={20} className="ml-auto"><path d="M0 0 L18 10 L0 20 Z" fill="#474747" /></Svg>}
    </button>
  );
}

function FillMenu() {
  return (
    <div className="absolute left-0 top-12 h-[682px] w-[396px] -translate-x-px rounded-[10px] border border-[#c2c2c2] bg-[#ececec] pt-[27px] text-[#262626] shadow-[0_14px_44px_rgba(0,0,0,0.28)]">
      <div className="px-[19px]">
        <button className="flex h-[42px] w-full items-center justify-center border-2 border-[#d6d6d6] bg-white pb-1.5 text-[24px]">채우기 없음</button>
        <h2 className="mt-5 h-8 text-[24px] leading-8">테마 색</h2>
        <div className="mt-4 flex justify-between">
          {THEME.map((c, i) => <button key={i} aria-label={`테마 ${i + 1}`} className={`h-8 w-8 border border-black/25 ${c}`} />)}
        </div>
        <div className="mt-3.5 flex justify-between">
          {SHADES.map((col, i) => (
            <div key={i} className="flex w-8 flex-col">
              {col.map((c, j) => <button key={j} aria-label={`테마 ${i + 1}-${j + 1}`} className={`h-8 border-x border-black/25 first:border-t last:border-b ${c}`} />)}
            </div>
          ))}
        </div>
        <h2 className="mt-5 h-8 text-[24px] leading-8">표준 색</h2>
        <div className="mt-4 flex justify-between">
          {STANDARD.map((c, i) => (
            <button key={i} aria-label={`표준 ${i + 1}`} className={`h-8 w-8 border border-black/25 ${c} ${i === 6 ? 'relative shadow-[inset_0_0_0_1px_#8c8c8c,inset_0_0_0_4px_#fff] outline-2 outline-[#8c8c8c]' : ''}`} />
          ))}
        </div>
      </div>
      <div className="mb-1.5 mt-[26px] h-1 bg-[#d5d5d5]" />
      <MenuItem
        label="다른 채우기 색..."
        icon={
          <Svg w={36} h={36}>
            <path d="M18 1 C8 1 1 8 1 18 C1 22 3 22 6 20 C11 15 17 18 16 25 C14 31 16 35 20 35 C29 35 35 27 35 18 C35 8 28 1 18 1 Z" fill="#fdfdfd" stroke={INK} strokeWidth="2" />
            <circle cx="8" cy="12" r="2.2" fill={BLUE} /><circle cx="16" cy="8" r="2.2" fill="#4fa858" /><circle cx="24" cy="10" r="2.2" fill="#ee9a44" /><circle cx="28" cy="18" r="2.2" fill="#e04b3e" /><circle cx="24" cy="26" r="2.2" fill="#8a36a0" />
          </Svg>
        }
      />
      <MenuItem label="그림..." icon={<PictureIcon w={36} h={28} />} />
      <MenuItem
        label="그라데이션" sub
        icon={
          <Svg w={40} h={38}>
            <rect width="40" height="38" fill="#9a9a9a" />
            <path d="M0 0 H14 L0 15 Z" fill="#fafafa" /><path d="M12 0 H27 L0 27 V12 Z" fill="#dedddb" /><path d="M26 0 H40 V8 L8 38 H0 V26 Z" fill="#c6c5c4" /><path d="M40 22 V38 H24 Z" fill="#777672" />
            <rect x="1" y="1" width="38" height="36" stroke={INK} strokeWidth="2" />
          </Svg>
        }
      />
      <MenuItem
        label="질감" sub
        icon={
          <Svg w={36} h={36}>
            <rect x="1" y="1" width="34" height="34" fill="#fbfbfb" stroke={INK} strokeWidth="2" />
            <path d="M4 4h4v4h-4Z M10 4h4v4h-4Z M16 4h2v2h-2Z M4 10h4v4h-4Z M10 10h2v2h-2Z M4 16h2v2h-2Z M28 22h4v4h-4Z M22 22h4v4h-4Z M28 28h4v4h-4Z M22 28h4v4h-4Z M16 28h4v4h-4Z M30 10h2v2h-2Z M26 14h2v2h-2Z M30 14h2v2h-2Z M22 18h2v2h-2Z M26 18h2v2h-2Z M30 18h2v2h-2Z M18 24h2v2h-2Z M12 30h2v2h-2Z" fill={BLUE} />
          </Svg>
        }
      />
    </div>
  );
}

/* ---------- status bar ---------- */

function StatusBar() {
  return (
    <footer className="h-[30px] shrink-0 overflow-hidden border-t-2 border-[#9e9e9e] bg-gradient-to-b from-[#e4e4e4] to-[#d6d6d6] text-[23px] text-[#5c5c5c]">
      <div className="flex h-10 items-center pl-9 pr-7">
        <span>슬라이드 1/1</span>
        <button className="ml-10">한국어</button>
        <button className="ml-10 flex items-center gap-1.5">
          <Svg w={30} h={34}>
            <circle cx="14" cy="6" r="5" stroke="#666" strokeWidth="2.2" />
            <path d="M9 9 L5 6 Q1 6 2 10 L8 15 L4 30 Q6 34 9 31 L13 22 L17 30 M19 9 L23 6 Q27 7 25 10 L19 15 L20 22 M17 25 L22 31 L30 20" stroke="#666" strokeWidth="2.2" />
          </Svg>
          접근성: 조사 필요
        </button>
        <div className="ml-auto flex h-full items-center">
          <button className="flex items-center gap-2.5">
            <Svg w={25} h={26}><path d="M12.5 0 L19 8 H6 Z" fill="#666" /><path d="M0 13 H25 M0 21 H25" stroke="#666" strokeWidth="2.6" /></Svg>메모
          </button>
          <button className="ml-[37px] flex items-center gap-2.5"><span className="h-[22px] w-[26px] rounded-sm bg-[#666]" />메모</button>
          <button aria-label="기본 보기" className="ml-[19px] flex h-full w-[74px] items-center justify-center bg-[#a3a3a3]">
            <Svg w={28} h={26}><rect width="28" height="26" rx="2" fill="#fff" /><rect x="8" y="3" width="18" height="16" fill="#a3a3a3" /><rect x="12" y="8" width="10" height="6" fill="#fff" /></Svg>
          </button>
          <button aria-label="여러 슬라이드" className="ml-5"><Svg w={30} h={24}><path d="M0 0 h12 v9 h-12 Z M18 0 h12 v9 h-12 Z M0 15 h12 v9 h-12 Z M18 15 h12 v9 h-12 Z" fill="#666" /></Svg></button>
          <button aria-label="읽기용 보기" className="ml-[42px]"><Svg w={31} h={26}><path d="M15.5 4 Q12 1 6 1 V22 Q12 22 15.5 25 Q19 22 25 22 V1 Q19 1 15.5 4 V25 M6 4 H1 V25 H30 V4 H25 M9 7 h3 M9 11 h3 M9 15 h3 M19 7 h3 M19 11 h3 M19 15 h3" stroke="#666" strokeWidth="2" /></Svg></button>
          <button aria-label="슬라이드 쇼" className="ml-10"><Svg w={31} h={26}><path d="M0 2 H30" stroke="#666" strokeWidth="3.5" /><path d="M3 4 V20 H27 V4 M11 11 H19" stroke="#666" strokeWidth="2.2" /></Svg></button>
          <button aria-label="축소" className="ml-9"><Svg w={16} h={16}><path d="M0 8 H16" stroke="#666" strokeWidth="3.5" /></Svg></button>
          <input
            type="range" aria-label="확대/축소" min={0} max={100} defaultValue={53}
            className="ml-3.5 h-2 w-[200px] appearance-none rounded-full bg-[#999] [&::-webkit-slider-thumb]:size-8 [&::-webkit-slider-thumb]:appearance-none [&::-webkit-slider-thumb]:rounded-full [&::-webkit-slider-thumb]:bg-white [&::-webkit-slider-thumb]:shadow-md"
          />
          <button aria-label="확대" className="ml-3.5"><Svg w={17} h={16}><path d="M0 8 H17 M8.5 0 V16" stroke="#666" strokeWidth="3" /></Svg></button>
          <span className="ml-[34px] w-[60px]">121%</span>
          <button aria-label="창에 맞춤" className="ml-[38px]">
            <Svg w={27} h={26}><rect x="1" y="1" width="25" height="24" rx="2" stroke="#666" strokeWidth="2" /><path d="M13.5 10 V4 M10.5 7 L13.5 4 L16.5 7 M10 13.5 H4 M7 10.5 L4 13.5 L7 16.5 M17 13.5 H23 M20 10.5 L23 13.5 L20 16.5" stroke="#666" strokeWidth="1.8" /></Svg>
          </button>
        </div>
      </div>
    </footer>
  );
}

export default function App() {
  return (
    <div className="flex h-screen flex-col overflow-hidden bg-[#f5f5f5] font-[Inter,'Noto_Sans_CJK_KR',sans-serif]">
      <TitleBar />
      <TabRow />
      <Ribbon />
      <main className="flex min-h-0 flex-1">
        <aside className="flex w-[486px] shrink-0 items-start bg-gradient-to-br from-[#d0d3d3] to-[#c9cdce] pt-3">
          <span className="w-[45px] pl-2 pt-1.5 text-[27px] leading-9 text-[#4a4a4a]">1</span>
          <button aria-label="슬라이드 1" className="w-[409px] rounded-2xl bg-[#ab5033] p-[7px]">
            <Thumbnail />
          </button>
        </aside>
        <div className="w-[9px] shrink-0 border-r-2 border-[#c9c9c9] bg-[#f5f5f5]" />
        <div className="flex min-w-0 flex-1 flex-col bg-[#ebebeb]">
          <div className="min-h-0 flex-1 overflow-hidden"><Slide /></div>
          <div className="h-[88px] shrink-0 border-t-2 border-[#c9c9c9]">
            <textarea
              aria-label="슬라이드 노트" placeholder="여기에 슬라이드 노트의 내용을 입력하십시오"
              className="block h-full w-full resize-none bg-transparent px-4 pt-3 text-[28px] leading-10 outline-none placeholder:text-black"
            />
          </div>
        </div>
      </main>
      <StatusBar />
    </div>
  );
}
